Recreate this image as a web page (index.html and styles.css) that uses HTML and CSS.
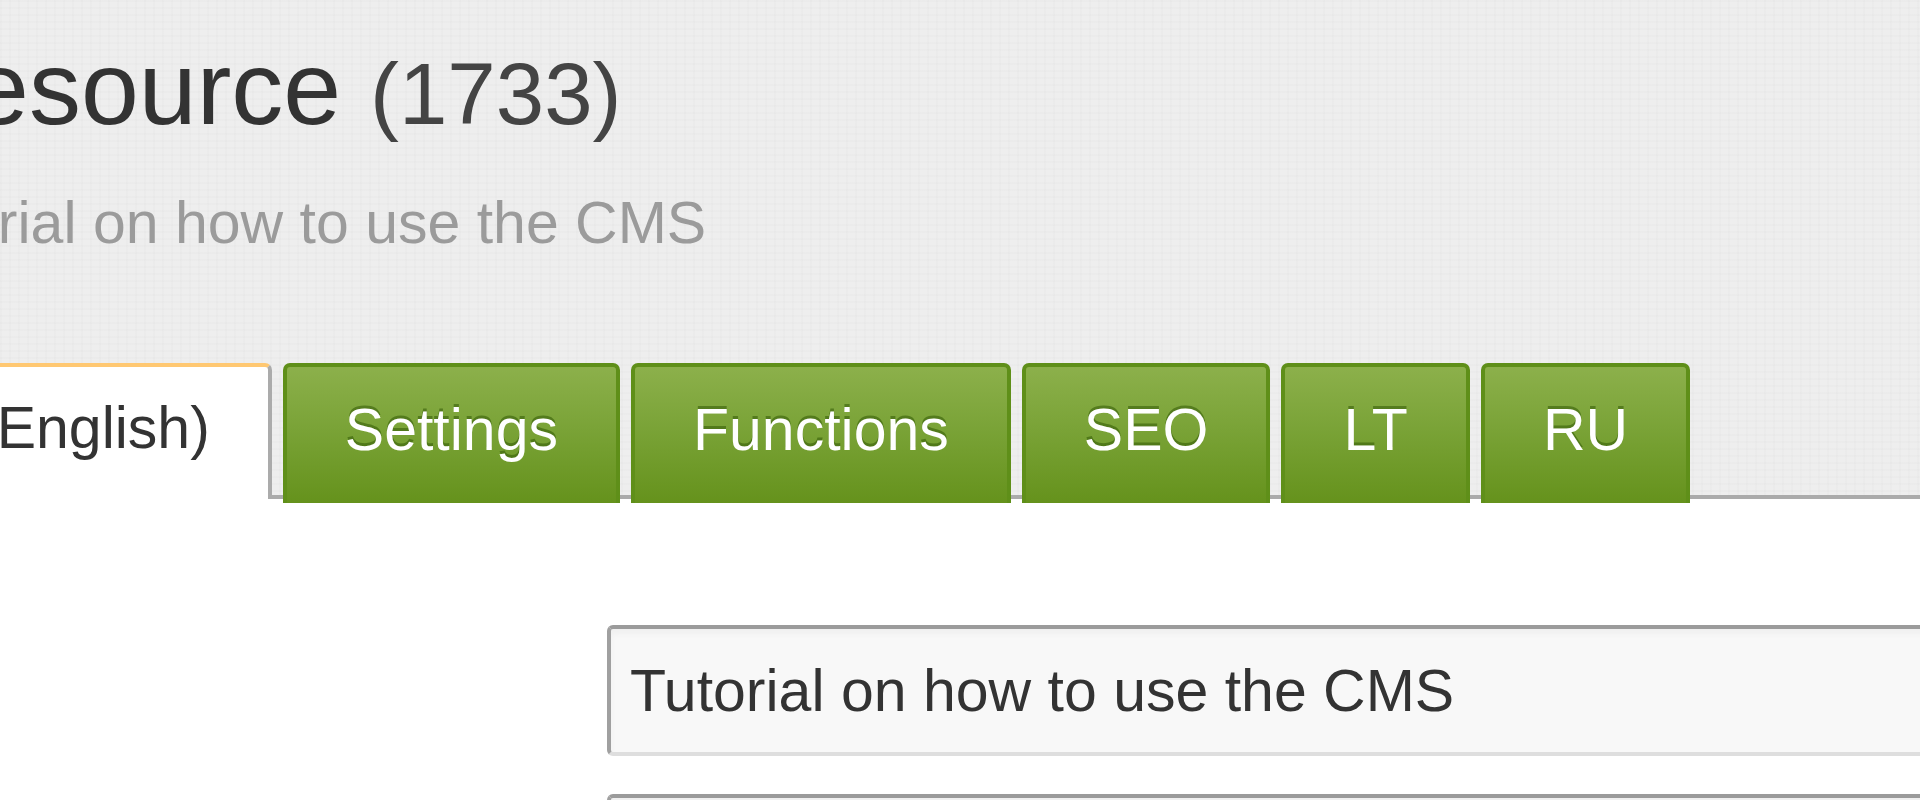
FILE: index.html
```html
<!DOCTYPE html>
<html lang="en">
<head>
<meta charset="utf-8">
<title>Resource (1733)</title>
<link rel="stylesheet" href="styles.css">
</head>
<body>
<header class="page-header">
  <h1 class="page-title">Resource <small class="page-count">(1733)</small></h1>
  <p class="page-subtitle">Tutorial on how to use the CMS</p>
</header>
<nav class="tabs">
  <a class="tab tab-active">(English)</a>
  <a class="tab">Settings</a>
  <a class="tab">Functions</a>
  <a class="tab">SEO</a>
  <a class="tab">LT</a>
  <a class="tab">RU</a>
</nav>
<main class="content">
  <div class="form-row">
    <label class="form-label" for="res-title"></label>
    <input id="res-title" class="form-input" type="text" value="Tutorial on how to use the CMS">
  </div>
  <div class="form-row form-row-next">
    <label class="form-label" for="res-alias"></label>
    <input id="res-alias" class="form-input" type="text" value="">
  </div>
</main>
</body>
</html>
```

FILE: styles.css
```css
html, body {
  margin: 0;
  padding: 0;
  height: 100%;
  overflow: hidden;
}

body {
  font-family: "Liberation Sans", Arial, sans-serif;
  color: #333;
  background-color: #eeeeee;
  background-image:
    repeating-linear-gradient(0deg, rgba(0,0,0,0.012) 0 2px, transparent 2px 7px),
    repeating-linear-gradient(90deg, rgba(0,0,0,0.012) 0 2px, transparent 2px 9px);
  display: flex;
  flex-direction: column;
}

.page-header {
  margin-left: -104px;
  padding-top: 31px;
}

.page-title {
  margin: 0;
  font-size: 104px;
  font-weight: normal;
  line-height: 1.1;
  color: #333;
  white-space: nowrap;
}

.page-count {
  font-size: 87px;
  color: #444;
}

.page-subtitle {
  margin: 43px 0 0 -14px;
  font-size: 59px;
  line-height: 1.2;
  color: #9b9b9b;
  white-space: nowrap;
}

.tabs {
  display: flex;
  align-items: flex-start;
  gap: 11px;
  margin: 104px 0 0 -85px;
  height: 132px;
  border-bottom: 4px solid #ababab;
}

.tab {
  position: relative;
  z-index: 1;
  box-sizing: border-box;
  height: 140px;
  margin-bottom: -8px;
  padding: 0 58px 10px;
  display: flex;
  align-items: center;
  font-size: 59px;
  color: #fff;
  white-space: nowrap;
  text-shadow: 0 -3px 0 rgba(50, 90, 5, 0.55);
  background: linear-gradient(#8cb04b, #7aa337 45%, #65921c);
  border: 4px solid #5f8f19;
  border-bottom: 0;
  border-radius: 7px 7px 0 0;
}

.tab-active {
  height: 136px;
  margin-bottom: -4px;
  color: #333;
  text-shadow: none;
  background: #fff;
  border-color: #ffc872 #ababab #ababab #ababab;
}

.content {
  flex: 1;
  background: #fff;
  padding-top: 126px;
}

.form-row {
  display: grid;
  grid-template-columns: 607px 1500px;
}

.form-row-next {
  margin-top: 38px;
}

.form-input {
  box-sizing: border-box;
  height: 131px;
  margin: 0;
  padding: 0 19px;
  font-family: "Liberation Sans", Arial, sans-serif;
  font-size: 59px;
  color: #333;
  background: #f8f8f8;
  border: 4px solid;
  border-color: #9b9b9b #c8c8c8 #dedede #a0a0a0;
  border-radius: 6px;
  box-shadow: inset 0 5px 6px rgba(0, 0, 0, 0.035);
  outline: none;
}
```
